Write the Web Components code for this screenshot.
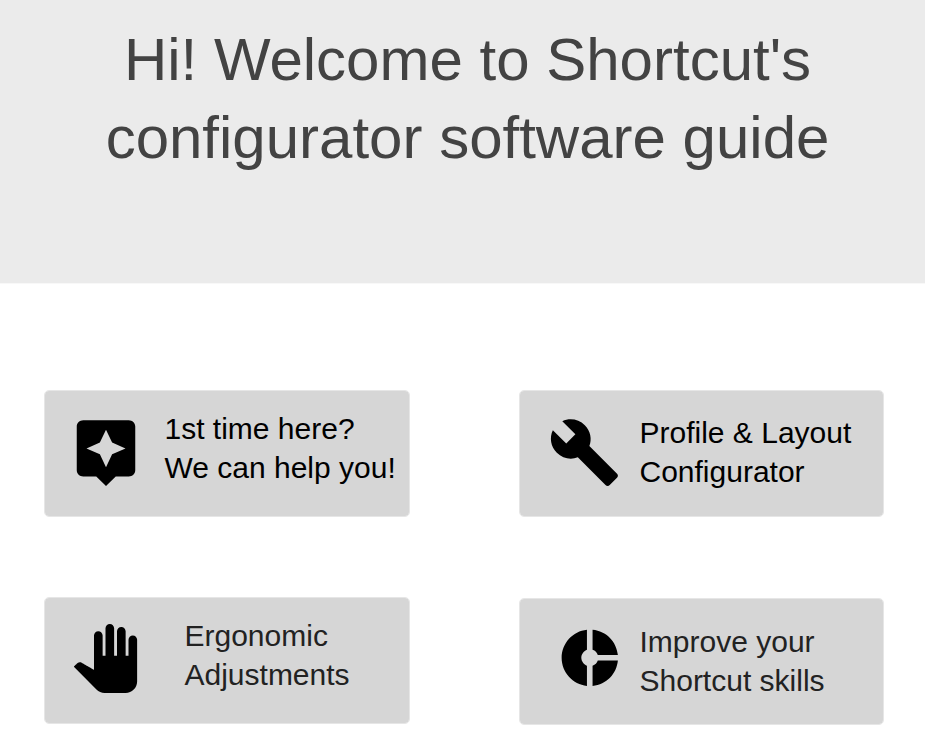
<!DOCTYPE html>
<html lang="en"><head><meta charset="utf-8"><title>Shortcut guide</title>
<style>body{margin:0;background:#fff;font-family:"Liberation Sans",Arial,sans-serif}</style></head>
<body><guide-page></guide-page>
<script>
const icons={
star:'<path d="M19 2H5c-1.11 0-2 .9-2 2v14c0 1.1.89 2 2 2h4l3 3 3-3h4c1.1 0 2-.9 2-2V4c0-1.1-.9-2-2-2zm-5.12 10.88L12 17l-1.88-4.12L6 11l4.12-1.88L12 5l1.88 4.12L18 11l-4.12 1.88z"/>',
wrench:'<path d="M22.7 19l-9.1-9.1c.9-2.3.4-5-1.5-6.9-2-2-5-2.4-7.4-1.3L9 6 6 9 1.6 4.7C.4 7.1.9 10.1 2.9 12.1c1.9 1.9 4.6 2.4 6.9 1.5l9.1 9.1c.4.4 1 .4 1.4 0l2.3-2.3c.5-.4.5-1.1.1-1.4z"/>',
hand:'<path d="M23 5.5V20c0 2.2-1.8 4-4 4h-7.3c-1.08 0-2.1-.43-2.85-1.19L1 14.83s1.26-1.23 1.3-1.25c.22-.19.49-.29.79-.29.22 0 .42.06.6.16.04.01 4.31 2.46 4.31 2.46V4c0-.83.67-1.5 1.5-1.5S11 3.17 11 4v7h1V1.5c0-.83.67-1.5 1.5-1.5S15 .67 15 1.5V11h1V2.5c0-.83.67-1.5 1.5-1.5s1.5.67 1.5 1.5V11h1V5.5c0-.83.67-1.5 1.5-1.5s1.5.67 1.5 1.5z"/>',
donut:'<path d="M11 9.16V2c-5 .5-9 4.79-9 10s4 9.5 9 10v-7.16c-1-.41-2-1.52-2-2.84s1-2.43 2-2.84zM14.86 11H22c-.48-4.75-4-8.53-9-9v7.16c1 .3 1.52.98 1.86 1.84zM13 14.84V22c5-.47 8.52-4.25 9-9h-7.14c-.34.86-.86 1.54-1.86 1.84z"/>'};
customElements.define('guide-banner',class extends HTMLElement{constructor(){super();this.attachShadow({mode:'open'}).innerHTML=`<style>:host{display:block;box-sizing:border-box;height:283px;padding:21px 0 0 10px;background:#ebebeb;color:#434343;text-align:center;box-shadow:0 1px #f8f8f8}h1{margin:0;font-weight:400;font-size:60px;line-height:78px;white-space:nowrap}</style><h1><slot></slot></h1>`}});
customElements.define('guide-card',class extends HTMLElement{connectedCallback(){this.attachShadow({mode:'open'}).innerHTML=`<style>:host{display:grid;grid-template-columns:var(--text-x,120px) 1fr;box-sizing:border-box;height:127px;background:#d6d6d6;background-clip:padding-box;border:1px solid #e6e6e6;border-radius:5px;color:#000}svg{display:block;width:var(--size,70px);height:var(--height,var(--size,70px));margin:var(--iy,26px) 0 0 var(--ix,27px);fill:#000}p{margin:var(--ty,18px) 0 0;font-size:30px;line-height:39px;white-space:nowrap}</style><svg viewBox="0 0 24 24" preserveAspectRatio="none">${icons[this.getAttribute('icon')]}</svg><p><slot></slot></p>`}});
customElements.define('guide-page',class extends HTMLElement{constructor(){super();this.attachShadow({mode:'open'}).innerHTML=`<style>:host{display:block;height:754px;overflow:hidden}main{display:grid;grid-template-columns:366.5px 365.5px;column-gap:108.5px;row-gap:80px;padding:107px 0 0 43.5px}
.star{--size:78px;--height:75px;--ix:22.5px;--iy:23px;--ty:18px}.wrench{--size:73px;--ix:28px;--iy:24.5px;--ty:22px}.hand{--size:69px;--ix:26.5px;--iy:26px;--ty:18px;--text-x:140px;color:#222}.donut{--size:67.5px;--ix:36px;--iy:24.5px;--ty:23px;color:#222;margin-top:1px}</style>
<guide-banner>Hi! Welcome to Shortcut's<br>configurator software guide</guide-banner><main><guide-card class="star" icon="star">1st time here?<br>We can help you!</guide-card><guide-card class="wrench" icon="wrench">Profile &amp; Layout<br>Configurator</guide-card><guide-card class="hand" icon="hand">Ergonomic<br>Adjustments</guide-card><guide-card class="donut" icon="donut">Improve your<br>Shortcut skills</guide-card></main>`}});
</script></body></html>
